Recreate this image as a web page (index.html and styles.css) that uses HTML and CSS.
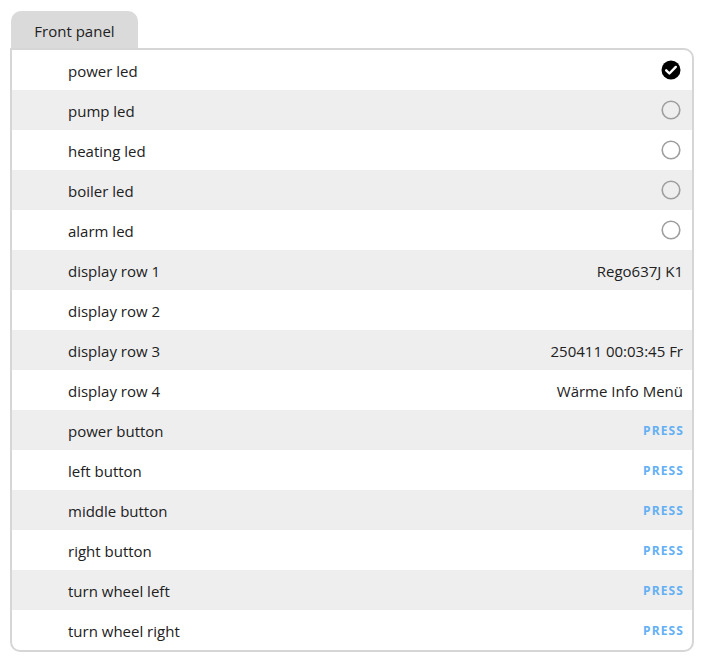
FILE: index.html
```html
<!DOCTYPE html>
<html>
<head>
<meta charset="utf-8">
<link rel="stylesheet" href="styles.css">
</head>
<body>
<div class="wrap">
  <div class="tab">Front panel</div>
  <div class="panel">
    <div class="row"><span class="label">power led</span><svg class="icon" viewBox="0 0 24 24"><circle cx="12" cy="12" r="9.5" fill="#000"/><path d="M7.2 12.3l3.2 3.2 6.4-6.6" fill="none" stroke="#fff" stroke-width="2.4" stroke-linecap="round" stroke-linejoin="round"/></svg></div>
    <div class="row"><span class="label">pump led</span><svg class="icon" viewBox="0 0 24 24"><circle cx="12" cy="12" r="8.8" fill="none" stroke="#9e9e9e" stroke-width="1.6"/></svg></div>
    <div class="row"><span class="label">heating led</span><svg class="icon" viewBox="0 0 24 24"><circle cx="12" cy="12" r="8.8" fill="none" stroke="#9e9e9e" stroke-width="1.6"/></svg></div>
    <div class="row"><span class="label">boiler led</span><svg class="icon" viewBox="0 0 24 24"><circle cx="12" cy="12" r="8.8" fill="none" stroke="#9e9e9e" stroke-width="1.6"/></svg></div>
    <div class="row"><span class="label">alarm led</span><svg class="icon" viewBox="0 0 24 24"><circle cx="12" cy="12" r="8.8" fill="none" stroke="#9e9e9e" stroke-width="1.6"/></svg></div>
    <div class="row"><span class="label">display row 1</span><span class="value">Rego637J K1</span></div>
    <div class="row"><span class="label">display row 2</span><span class="value"></span></div>
    <div class="row"><span class="label">display row 3</span><span class="value">250411 00:03:45 Fr</span></div>
    <div class="row"><span class="label">display row 4</span><span class="value">Wärme Info Menü</span></div>
    <div class="row"><span class="label">power button</span><span class="btn">PRESS</span></div>
    <div class="row"><span class="label">left button</span><span class="btn">PRESS</span></div>
    <div class="row"><span class="label">middle button</span><span class="btn">PRESS</span></div>
    <div class="row"><span class="label">right button</span><span class="btn">PRESS</span></div>
    <div class="row"><span class="label">turn wheel left</span><span class="btn">PRESS</span></div>
    <div class="row"><span class="label">turn wheel right</span><span class="btn">PRESS</span></div>
  </div>
</div>
</body>
</html>
```
FILE: styles.css
```css
html, body {
  margin: 0;
  padding: 0;
  background: #fff;
}
body {
  font-family: "Open Sans", "Noto Sans", sans-serif;
  font-size: 15px;
  color: #212121;
}
.wrap {
  padding: 11px 7px 0 10px;
  display: flex;
  flex-direction: column;
  align-items: flex-start;
}
.tab {
  margin-left: 1px;
  width: 127px;
  height: 37px;
  box-sizing: border-box;
  background: #dadada;
  border-radius: 10px 10px 0 0;
  display: flex;
  align-items: center;
  justify-content: center;
  font-size: 15px;
  padding-top: 2px;
}
.panel {
  align-self: stretch;
  border: 2px solid #d6d6d6;
  border-radius: 0 10px 10px 10px;
  overflow: hidden;
  display: flex;
  flex-direction: column;
}
.row {
  height: 40px;
  box-sizing: border-box;
  display: flex;
  align-items: center;
  justify-content: space-between;
  padding: 0 9px 0 56px;
}
.row:nth-child(even) {
  background: #eeeeee;
}
.label, .value {
  font-size: 15px;
  position: relative;
  top: 1px;
}
.icon {
  width: 24px;
  height: 24px;
  display: block;
}
.btn {
  color: #64b0f4;
  font-weight: 700;
  font-size: 12px;
  letter-spacing: 1.1px;
  margin-right: -1px;
}
```
